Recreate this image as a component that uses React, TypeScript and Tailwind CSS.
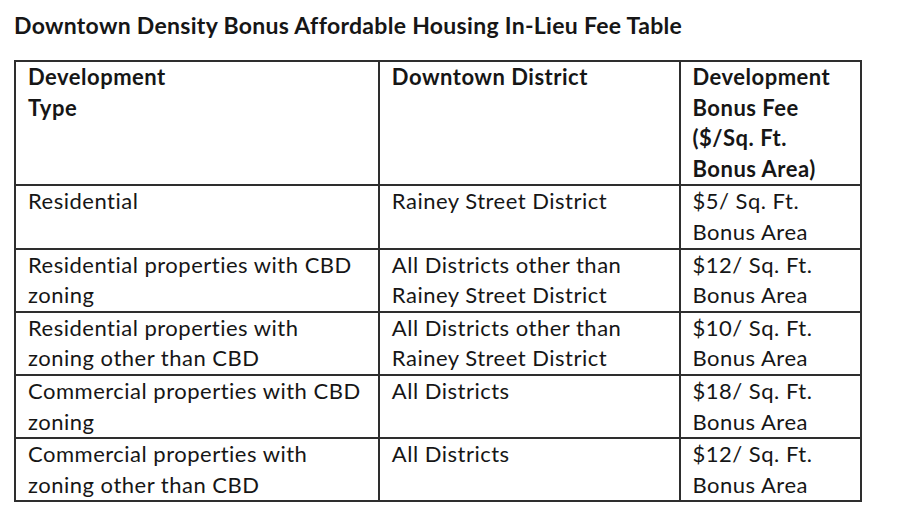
const rows: { type: string[]; district: string[]; fee: string[] }[] = [
  {
    type: ["Residential"],
    district: ["Rainey Street District"],
    fee: ["$5/ Sq. Ft.", "Bonus Area"],
  },
  {
    type: ["Residential properties with CBD", "zoning"],
    district: ["All Districts other than", "Rainey Street District"],
    fee: ["$12/ Sq. Ft.", "Bonus Area"],
  },
  {
    type: ["Residential properties with", "zoning other than CBD"],
    district: ["All Districts other than", "Rainey Street District"],
    fee: ["$10/ Sq. Ft.", "Bonus Area"],
  },
  {
    type: ["Commercial properties with CBD", "zoning"],
    district: ["All Districts"],
    fee: ["$18/ Sq. Ft.", "Bonus Area"],
  },
  {
    type: ["Commercial properties with", "zoning other than CBD"],
    district: ["All Districts"],
    fee: ["$12/ Sq. Ft.", "Bonus Area"],
  },
];

function Lines({ lines }: { lines: string[] }) {
  return (
    <>
      {lines.map((l) => (
        <span key={l} className="block whitespace-nowrap">
          {l}
        </span>
      ))}
    </>
  );
}

export default function App() {
  const cell = "border-2 border-[#2e2e2e] px-[12px] py-0 align-top text-left";

  return (
    <div
      className="min-h-screen bg-white px-[14px] pt-[10px] text-[#161616]"
      style={{ fontFamily: "Lato, 'Open Sans', sans-serif" }}
    >
      <h1 className="text-[23px] font-bold leading-[30px] tracking-[0.3px]">
        Downtown Density Bonus Affordable Housing In-Lieu Fee Table
      </h1>

      <table className="mt-[20px] w-[848px] border-collapse text-[22px] leading-[30.6px] tracking-[0.5px]">
        <colgroup>
          <col className="w-[364px]" />
          <col className="w-[302px]" />
          <col className="w-[182px]" />
        </colgroup>
        <thead>
          <tr className="font-bold">
            <th className={cell}>
              <Lines lines={["Development", "Type"]} />
            </th>
            <th className={cell}>
              <Lines lines={["Downtown District"]} />
            </th>
            <th className={cell}>
              <Lines
                lines={["Development", "Bonus Fee", "($/Sq. Ft.", "Bonus Area)"]}
              />
            </th>
          </tr>
        </thead>
        <tbody>
          {rows.map((r, i) => (
            <tr key={i}>
              <td className={cell}>
                <Lines lines={r.type} />
              </td>
              <td className={cell}>
                <Lines lines={r.district} />
              </td>
              <td className={cell}>
                <Lines lines={r.fee} />
              </td>
            </tr>
          ))}
        </tbody>
      </table>
    </div>
  );
}
